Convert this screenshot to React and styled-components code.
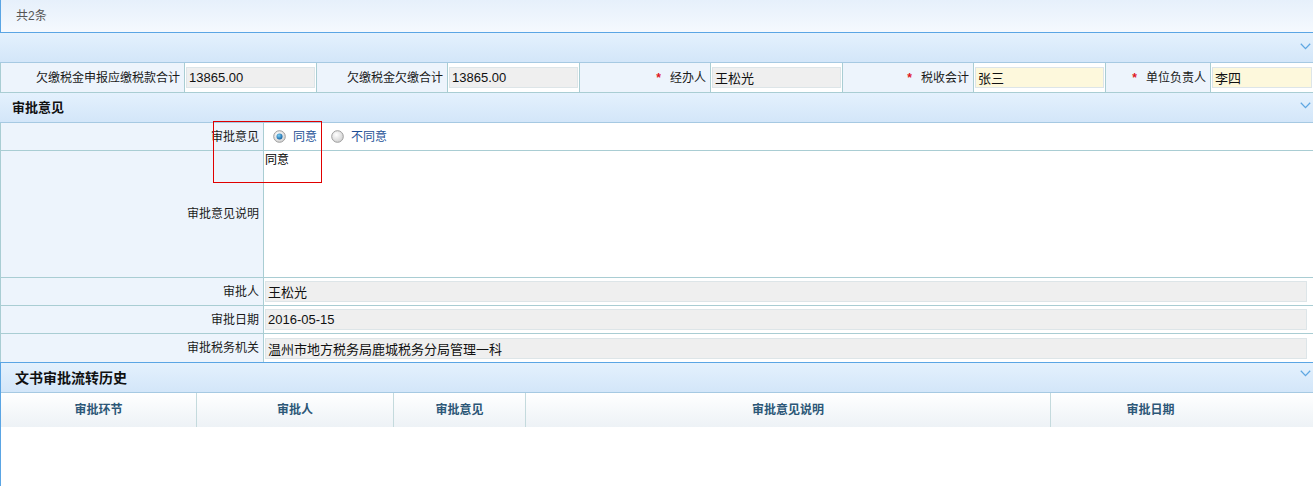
import React from "react";
import styled, { createGlobalStyle, css } from "styled-components";

const Global = createGlobalStyle`
  html, body { margin: 0; padding: 0; background: #fff; }
  body {
    font-family: "Liberation Sans", "Noto Sans CJK SC", sans-serif;
    font-size: 12px;
    color: #1a1a1a;
    overflow: hidden;
  }
  * { box-sizing: border-box; }
`;

const Page = styled.div`
  width: 1313px;
  height: 486px;
  display: flex;
  flex-direction: column;
  overflow: hidden;
`;

const Toolbar = styled.div`
  height: 33px;
  flex: none;
  display: flex;
  align-items: center;
  padding-left: 15px;
  border-left: 1px solid #5aa5e4;
  border-bottom: 1px solid #5aa5e4;
  background: linear-gradient(#e6f0fb, #f5f9fe);
  color: #555;
  line-height: 14px;
`;

const HeaderBar = styled.div`
  height: ${(p) => p.$h || 30}px;
  flex: none;
  display: flex;
  align-items: center;
  padding-left: ${(p) => p.$pl || 12}px;
  border-bottom: 1px solid #a6c9e2;
  background: linear-gradient(#e4f1fd, #d3e6f9);
  font-weight: bold;
  font-size: ${(p) => p.$fs || 13}px;
  color: #111;
  line-height: 16px;
`;

const HeaderTitle = styled.span`
  flex: 1;
`;

const ChevronWrap = styled.span`
  align-self: flex-start;
  margin-top: ${(p) => p.$mt || 10}px;
  margin-right: 2px;
  width: 11px;
  height: 7px;
  display: flex;
`;

const Chevron = ({ mt }) => (
  <ChevronWrap $mt={mt}>
    <svg width="11" height="7" viewBox="0 0 11 7">
      <polyline
        points="0.8,0.8 5.5,5.6 10.2,0.8"
        fill="none"
        stroke="#5ea7e2"
        strokeWidth="1.3"
      />
    </svg>
  </ChevronWrap>
);

const SummaryGrid = styled.div`
  flex: none;
  display: grid;
  grid-template-columns: 184px 132px 131px 132px 131px 132px 131px 132px 105px 1fr;
  border-left: 1px solid #a9cdd3;
  border-bottom: 1px solid #a9cdd3;
  height: 30px;
`;

const LabelCell = styled.div`
  display: flex;
  align-items: center;
  justify-content: flex-end;
  padding-right: 4px;
  background: #edf4fc;
  border-right: 1px solid #a9cdd3;
  color: #1a1a1a;
  line-height: 14px;
  white-space: nowrap;
  ${(p) =>
    p.$bottom &&
    css`
      border-bottom: 1px solid #a9cdd3;
    `}
`;

const Star = styled.span`
  color: #e0141e;
  font-weight: bold;
  margin-right: 9px;
  font-size: 12px;
`;

const ValueCell = styled.div`
  display: flex;
  align-items: ${(p) => (p.$top ? "stretch" : "center")};
  padding: ${(p) => p.$pad || "0 1px"};
  background: #fff;
  border-right: ${(p) => (p.$noRight ? "none" : "1px solid #a9cdd3")};
  ${(p) =>
    p.$bottom &&
    css`
      border-bottom: 1px solid #a9cdd3;
    `}
`;

const Field = styled.input`
  width: 100%;
  height: 21px;
  margin: 0;
  padding: 0 2px;
  border: 1px solid #dde5e8;
  background: ${(p) => (p.$required ? "#fdf8dc" : "#efefef")};
  font-family: "Liberation Sans", "Noto Sans CJK SC", sans-serif;
  font-size: 13px;
  color: #111;
  outline: none;
`;

const DetailGrid = styled.div`
  position: relative;
  flex: none;
  display: grid;
  grid-template-columns: 263px 1fr;
  grid-template-rows: 28px 127px 28px 28px 28px;
  border-left: 1px solid #a9cdd3;
`;

const RadioGroup = styled.div`
  display: flex;
  align-items: center;
  padding-left: 8px;
`;

const RadioLabel = styled.label`
  display: flex;
  align-items: center;
  gap: 7px;
  margin-right: 14px;
  color: #1d4f96;
  line-height: 14px;
  cursor: pointer;
`;

const Radio = ({ checked, id }) => (
  <svg width="13" height="13" viewBox="0 0 13 13">
    <defs>
      <radialGradient id={`rg${id}`} cx="40%" cy="35%" r="70%">
        <stop offset="0" stopColor="#ffffff" />
        <stop offset="1" stopColor="#cfcfcf" />
      </radialGradient>
      <radialGradient id={`rb${id}`} cx="40%" cy="35%" r="70%">
        <stop offset="0" stopColor="#7fd0f5" />
        <stop offset="1" stopColor="#0a5a9e" />
      </radialGradient>
    </defs>
    <circle cx="6.5" cy="6.5" r="5.8" fill={`url(#rg${id})`} stroke="#9d9d9d" strokeWidth="1" />
    {checked && <circle cx="6.5" cy="6.5" r="3" fill={`url(#rb${id})`} />}
  </svg>
);

const Memo = styled.textarea`
  width: 100%;
  height: 100%;
  margin: 0;
  padding: 2px 0 0 1px;
  border: none;
  resize: none;
  outline: none;
  font-family: "Liberation Sans", "Noto Sans CJK SC", sans-serif;
  font-size: 12px;
  line-height: 14px;
  color: #000;
  background: #fff;
`;

const FocusBox = styled.div`
  position: absolute;
  left: 212px;
  top: -2px;
  width: 109px;
  height: 62px;
  border: 1px solid #e00000;
  pointer-events: none;
`;

const HistoryPanel = styled.div`
  flex: 1;
  display: flex;
  flex-direction: column;
  border-top: 1px solid #5aa5e4;
  border-left: 1px solid #5aa5e4;
`;

const HistoryHead = styled.div`
  flex: none;
  height: 34px;
  display: grid;
  grid-template-columns: 196px 197px 132px 525px 199px 1fr;
  background: linear-gradient(#ffffff, #edf2f6);
`;

const HeadCell = styled.div`
  display: flex;
  align-items: center;
  justify-content: center;
  border-right: ${(p) => (p.$last ? "none" : "1px solid #c4dadd")};
  font-weight: bold;
  color: #2c5777;
  line-height: 14px;
`;

const HistoryBody = styled.div`
  flex: 1;
  background: #fff;
`;

const summary = [
  { label: "欠缴税金申报应缴税款合计", value: "13865.00" },
  { label: "欠缴税金欠缴合计", value: "13865.00" },
  { label: "经办人", value: "王松光", star: true },
  { label: "税收会计", value: "张三", star: true, required: true },
  { label: "单位负责人", value: "李四", star: true, required: true },
];

const detailRows = [
  { label: "审批人", value: "王松光" },
  { label: "审批日期", value: "2016-05-15" },
  { label: "审批税务机关", value: "温州市地方税务局鹿城税务分局管理一科" },
];

const headCols = ["审批环节", "审批人", "审批意见", "审批意见说明", "审批日期"];

export default function App() {
  return (
    <Page>
      <Global />
      <Toolbar>共2条</Toolbar>
      <HeaderBar>
        <HeaderTitle />
        <Chevron mt={10} />
      </HeaderBar>
      <SummaryGrid>
        {summary.map((s, i) => (
          <React.Fragment key={s.label}>
            <LabelCell>
              {s.star && <Star>*</Star>}
              {s.label}
            </LabelCell>
            <ValueCell $noRight={i === summary.length - 1}>
              <Field readOnly $required={s.required} defaultValue={s.value} />
            </ValueCell>
          </React.Fragment>
        ))}
      </SummaryGrid>
      <HeaderBar>
        <HeaderTitle>审批意见</HeaderTitle>
        <Chevron mt={9} />
      </HeaderBar>
      <DetailGrid>
        <LabelCell $bottom>审批意见</LabelCell>
        <ValueCell $bottom $noRight>
          <RadioGroup>
            <RadioLabel>
              <Radio checked id="a" />
              同意
            </RadioLabel>
            <RadioLabel>
              <Radio id="b" />
              不同意
            </RadioLabel>
          </RadioGroup>
        </ValueCell>
        <LabelCell $bottom>审批意见说明</LabelCell>
        <ValueCell $bottom $noRight $top $pad="0">
          <Memo defaultValue="同意" />
        </ValueCell>
        {detailRows.map((r, i) => (
          <React.Fragment key={r.label}>
            <LabelCell $bottom={i < detailRows.length - 1}>{r.label}</LabelCell>
            <ValueCell $bottom={i < detailRows.length - 1} $noRight $pad="0 6px 0 1px">
              <Field readOnly defaultValue={r.value} />
            </ValueCell>
          </React.Fragment>
        ))}
        <FocusBox />
      </DetailGrid>
      <HistoryPanel>
        <HeaderBar $pl={14} $fs={14}>
          <HeaderTitle>文书审批流转历史</HeaderTitle>
          <Chevron mt={7} />
        </HeaderBar>
        <HistoryHead>
          {headCols.map((c, i) => (
            <HeadCell key={c} $last={i === headCols.length - 1}>
              {c}
            </HeadCell>
          ))}
          <HeadCell $last />
        </HistoryHead>
        <HistoryBody />
      </HistoryPanel>
    </Page>
  );
}
